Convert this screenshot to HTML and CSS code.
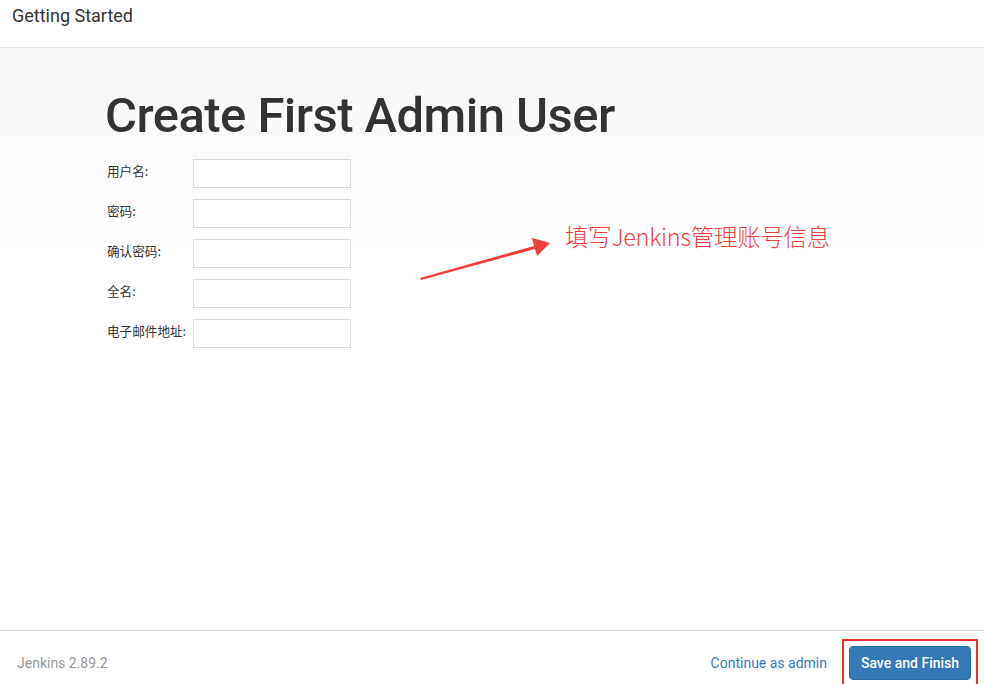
FILE: index.html
```html
<!DOCTYPE html>
<html lang="zh">
<head>
<meta charset="utf-8">
<title>Getting Started</title>
<link rel="stylesheet" href="styles.css">
</head>
<body>
<div class="page">
  <header class="header">Getting Started</header>
  <main class="main">
    <h1 class="title">Create First Admin User</h1>
    <form class="form">
      <div class="row"><label class="label">用户名:</label><input class="input" type="text"></div>
      <div class="row"><label class="label">密码:</label><input class="input" type="password"></div>
      <div class="row"><label class="label">确认密码:</label><input class="input" type="password"></div>
      <div class="row"><label class="label">全名:</label><input class="input" type="text"></div>
      <div class="row"><label class="label">电子邮件地址:</label><input class="input" type="text"></div>
    </form>
    <svg class="arrow" width="140" height="50" viewBox="0 0 140 50">
      <polygon points="0,44 114,12 112,4 130,9 117,22 115,15 1,46" fill="#f23d3d"/>
    </svg>
    <div class="note">填写Jenkins管理账号信息</div>
  </main>
  <footer class="footer">
    <span class="version">Jenkins 2.89.2</span>
    <div class="actions">
      <a class="link" href="#">Continue as admin</a>
      <div class="highlight"><button class="btn" type="button">Save and Finish</button></div>
    </div>
  </footer>
</div>
</body>
</html>
```

FILE: styles.css
```css
* { box-sizing: border-box; }
html, body { margin: 0; padding: 0; }
body {
  font-family: Roboto, "Noto Sans CJK SC", sans-serif;
  color: #333;
  background: #fff;
  width: 984px;
  height: 684px;
  overflow: hidden;
}
.page { display: flex; flex-direction: column; height: 684px; }
.header {
  height: 48px;
  flex: none;
  border-bottom: 1px solid #e6e6e6;
  padding: 4px 0 0 12px;
  font-size: 18px;
  font-weight: 400;
  line-height: 24px;
  color: #333;
}
.main {
  position: relative;
  height: 582px;
  flex: none;
  padding: 0 0 0 105px;
  background: linear-gradient(180deg, #f7f7f7 0px, #fbfbfb 100px, #ffffff 200px);
}
.title {
  margin: 0;
  padding-top: 39px;
  font-size: 49px;
  font-weight: 500;
  line-height: 58px;
  color: #333;
  letter-spacing: -0.55px;
}
.form { margin-top: 14px; display: flex; flex-direction: column; gap: 11px; padding-left: 2px; }
.row { display: flex; align-items: flex-start; height: 29px; }
.label {
  width: 86px;
  padding-top: 3px;
  font-family: "Noto Sans CJK SC", sans-serif;
  font-size: 12.6px;
  line-height: 18px;
  color: #333;
}
.input {
  width: 158px;
  height: 29px;
  border: 1px solid #d9d9d9;
  background: #fff;
  margin: 0;
  padding: 0 6px;
}
.arrow { position: absolute; left: 420px; top: 186px; }
.note {
  position: absolute;
  left: 565px;
  top: 173px;
  font-family: "Noto Sans CJK SC", sans-serif;
  font-size: 23.5px;
  font-weight: 300;
  line-height: 30px;
  color: #f23d3d;
  letter-spacing: -0.3px;
}
.footer {
  flex: 1;
  border-top: 1px solid #cfcfcf;
  display: flex;
  align-items: center;
  justify-content: space-between;
  padding: 8px 6px 0 17px;
}
.version { font-size: 14px; color: #999; }
.actions { display: flex; align-items: center; gap: 14px; }
.link { font-size: 14px; color: #3e7ab5; text-decoration: none; margin-right: 1px; }
.highlight { border: 2px solid #e83030; padding: 5px; }
.btn {
  display: block;
  width: 122px;
  height: 34px;
  border: 1px solid #2e6da4;
  border-radius: 4px;
  background: #337ab7;
  color: #fff;
  font-family: Roboto, sans-serif;
  font-size: 14px;
  font-weight: 500;
  padding: 0;
}
```
